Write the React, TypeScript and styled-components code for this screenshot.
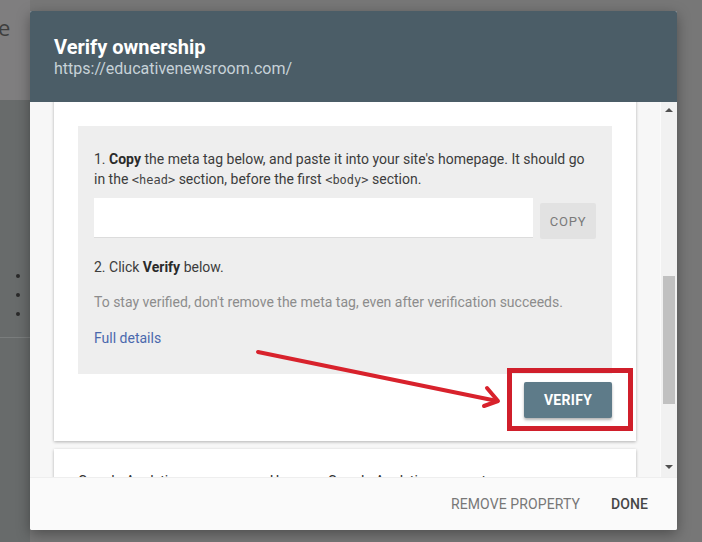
import React from "react";
import styled, { createGlobalStyle } from "styled-components";

const Global = createGlobalStyle`
  html, body { margin: 0; padding: 0; }
  body { font-family: Roboto, "Noto Sans", Arial, sans-serif; width: 702px; height: 542px; overflow: hidden; }
`;

const Page = styled.div`
  position: relative;
  width: 702px;
  height: 542px;
  background: #767676;
  overflow: hidden;
  display: flex;
`;

const LeftStrip = styled.div`
  width: 30px;
  display: flex;
  flex-direction: column;
`;

const TopBand = styled.div`
  height: 100px;
  background: #7f7e7f;
  color: #3e3e3e;
  font-family: "Open Sans", Roboto, sans-serif;
  font-size: 22px;
  line-height: 1;
  padding-top: 16px;
  box-sizing: border-box;
  overflow: hidden;
  text-indent: -2px;
`;

const LowerBand = styled.div`
  flex: 1;
  background: #686b6b;
  padding-top: 166px;
`;

const Bullets = styled.ul`
  margin: 0;
  padding: 0 0 14px 0;
  list-style: none;
  border-bottom: 1px solid #7a7d7d;
`;

const Bullet = styled.li`
  height: 19px;
  display: flex;
  align-items: center;
  padding-left: 16px;
  &::before {
    content: "";
    width: 4px;
    height: 4px;
    border-radius: 50%;
    background: #2a2a2a;
  }
`;

const Backdrop = styled.div`
  flex: 1;
  background: #777;
`;

const Dialog = styled.div`
  position: absolute;
  left: 30px;
  top: 11px;
  width: 647px;
  height: 519px;
  display: flex;
  flex-direction: column;
  background: #f7f7f7;
  border-radius: 2px;
  overflow: hidden;
  box-shadow: 0 4px 14px rgba(0, 0, 0, 0.35);
`;

const Header = styled.div`
  background: #4b5d67;
  padding: 24px 24px 23px;
  position: relative;
  z-index: 2;
`;

const Title = styled.div`
  color: #ffffff;
  font-size: 20px;
  font-weight: 700;
  line-height: 24px;
`;

const Url = styled.div`
  color: #c7d2d8;
  font-size: 16px;
  line-height: 20px;
`;

const Body = styled.div`
  flex: 1;
  display: flex;
  min-height: 0;
  overflow: hidden;
`;

const Scroller = styled.div`
  flex: 1;
  overflow: hidden;
  padding: 0 24px 0 24px;
`;

const ScrollInner = styled.div`
  margin-top: -42px;
  display: flex;
  flex-direction: column;
  gap: 8px;
`;

const Card = styled.div`
  background: #ffffff;
  box-shadow: 0 1px 3px rgba(0, 0, 0, 0.28);
  padding: 24px 24px 23px;
`;

const Intro = styled.p`
  margin: 0 0 22px;
  font-size: 14px;
  line-height: 20px;
  color: #444;
`;

const StepBox = styled.div`
  background: #eeeeee;
  padding: 23px 16px 26px;
  display: flex;
  flex-direction: column;
`;

const StepText = styled.p<{ $gap?: number; $muted?: boolean }>`
  margin: ${(p) => p.$gap ?? 0}px 0 0;
  font-size: 14px;
  line-height: 20px;
  color: ${(p) => (p.$muted ? "#8c8c8c" : "#3c3c3c")};
  b { font-weight: 700; color: #2a2a2a; }
`;

const Code = styled.code`
  font-family: "DejaVu Sans Mono", "Liberation Mono", monospace;
  font-size: 12px;
  color: #444;
`;

const CopyRow = styled.div`
  display: flex;
  align-items: flex-end;
  gap: 7px;
  margin-top: 8px;
`;

const MetaInput = styled.div`
  width: 440px;
  height: 40px;
  background: #ffffff;
  border-bottom: 1px solid #dcdcdc;
  box-sizing: border-box;
`;

const CopyButton = styled.button`
  width: 56px;
  height: 36px;
  border: none;
  border-radius: 2px;
  background: #e2e2e2;
  color: #7a7a7a;
  font-family: Roboto, sans-serif;
  font-size: 13px;
  letter-spacing: 0.8px;
  padding: 0;
  margin-bottom: -1px;
`;

const LinkText = styled.a`
  margin-top: 16px;
  font-size: 14px;
  line-height: 20px;
  color: #4a68ad;
  text-decoration: none;
  align-self: flex-start;
`;

const ActionRow = styled.div`
  display: flex;
  justify-content: flex-end;
  margin-top: 8px;
`;

const Highlight = styled.div`
  position: relative;
  &::after {
    content: "";
    position: absolute;
    left: -17px;
    right: -21px;
    top: -14px;
    bottom: -13px;
    border: 5px solid #d01f2b;
    pointer-events: none;
  }
`;

const VerifyButton = styled.button`
  width: 88px;
  height: 36px;
  border: none;
  border-radius: 2px;
  background: #5e7b89;
  color: #ffffff;
  font-family: Roboto, sans-serif;
  font-weight: 700;
  font-size: 14px;
  letter-spacing: 0.3px;
  box-shadow: 0 2px 3px rgba(0, 0, 0, 0.3);
  padding: 0;
  display: block;
`;

const SecondCard = styled(Card)`
  padding: 22px 24px;
  display: flex;
  font-size: 14px;
  line-height: 20px;
  color: #333;
`;

const SecondTitle = styled.div`
  width: 192px;
`;

const Scrollbar = styled.div`
  width: 17px;
  background: #f1f1f1;
  border-left: 1px solid #fbfbfb;
  display: flex;
  flex-direction: column;
  align-items: center;
  padding: 6px 0 8px;
  box-sizing: border-box;
`;

const Arrow = styled.div<{ $down?: boolean }>`
  width: 0;
  height: 0;
  border-left: 4px solid transparent;
  border-right: 4px solid transparent;
  ${(p) => (p.$down ? "border-top: 4px solid #505050;" : "border-bottom: 4px solid #505050;")}
`;

const Track = styled.div`
  flex: 1;
  width: 100%;
  padding: 0 2px;
  box-sizing: border-box;
  display: flex;
  flex-direction: column;
`;

const Thumb = styled.div`
  background: #c1c1c1;
  margin-top: 164px;
  height: 128px;
`;

const Footer = styled.div`
  height: 52px;
  background: #fafafa;
  border-top: 1px solid #eeeeee;
  display: flex;
  justify-content: flex-end;
  align-items: center;
  padding-right: 21px;
  gap: 15px;
  position: relative;
  z-index: 2;
`;

const FooterButton = styled.button<{ $primary?: boolean }>`
  border: none;
  background: transparent;
  font-family: Roboto, sans-serif;
  font-size: 14px;
  font-weight: ${(p) => (p.$primary ? 500 : 400)};
  color: ${(p) => (p.$primary ? "#474747" : "#777777")};
  padding: 8px;
  letter-spacing: 0.1px;
`;

const Annotation = styled.svg`
  position: absolute;
  left: 0;
  top: 0;
  pointer-events: none;
`;

export default function App() {
  return (
    <>
      <Global />
      <Page>
        <LeftStrip>
          <TopBand>e</TopBand>
          <LowerBand>
            <Bullets>
              <Bullet />
              <Bullet />
              <Bullet />
            </Bullets>
          </LowerBand>
        </LeftStrip>
        <Backdrop />
        <Dialog>
          <Header>
            <Title>Verify ownership</Title>
            <Url>https://educativenewsroom.com/</Url>
          </Header>
          <Body>
            <Scroller>
              <ScrollInner>
                <Card>
                  <Intro>Add a meta tag to your site's homepage. Show me an example.</Intro>
                  <StepBox>
                    <StepText>
                      1. <b>Copy</b> the meta tag below, and paste it into your site's homepage. It should go
                      in the <Code>&lt;head&gt;</Code> section, before the first <Code>&lt;body&gt;</Code> section.
                    </StepText>
                    <CopyRow>
                      <MetaInput />
                      <CopyButton>COPY</CopyButton>
                    </CopyRow>
                    <StepText $gap={19}>
                      2. Click <b>Verify</b> below.
                    </StepText>
                    <StepText $gap={15} $muted>
                      To stay verified, don't remove the meta tag, even after verification succeeds.
                    </StepText>
                    <LinkText href="#">Full details</LinkText>
                  </StepBox>
                  <ActionRow>
                    <Highlight>
                      <VerifyButton>VERIFY</VerifyButton>
                    </Highlight>
                  </ActionRow>
                </Card>
                <SecondCard>
                  <SecondTitle>Google Analytics</SecondTitle>
                  <div>Use your Google Analytics account</div>
                </SecondCard>
              </ScrollInner>
            </Scroller>
            <Scrollbar>
              <Arrow />
              <Track>
                <Thumb />
              </Track>
              <Arrow $down />
            </Scrollbar>
          </Body>
          <Footer>
            <FooterButton>REMOVE PROPERTY</FooterButton>
            <FooterButton $primary>DONE</FooterButton>
          </Footer>
        </Dialog>
        <Annotation width="702" height="542" viewBox="0 0 702 542">
          <g stroke="#d8222c" strokeWidth="4" strokeLinecap="round" fill="none">
            <line x1="258" y1="352" x2="497" y2="401" />
            <polyline points="487,388 498,401 484,406" strokeLinejoin="round" />
          </g>
        </Annotation>
      </Page>
    </>
  );
}
